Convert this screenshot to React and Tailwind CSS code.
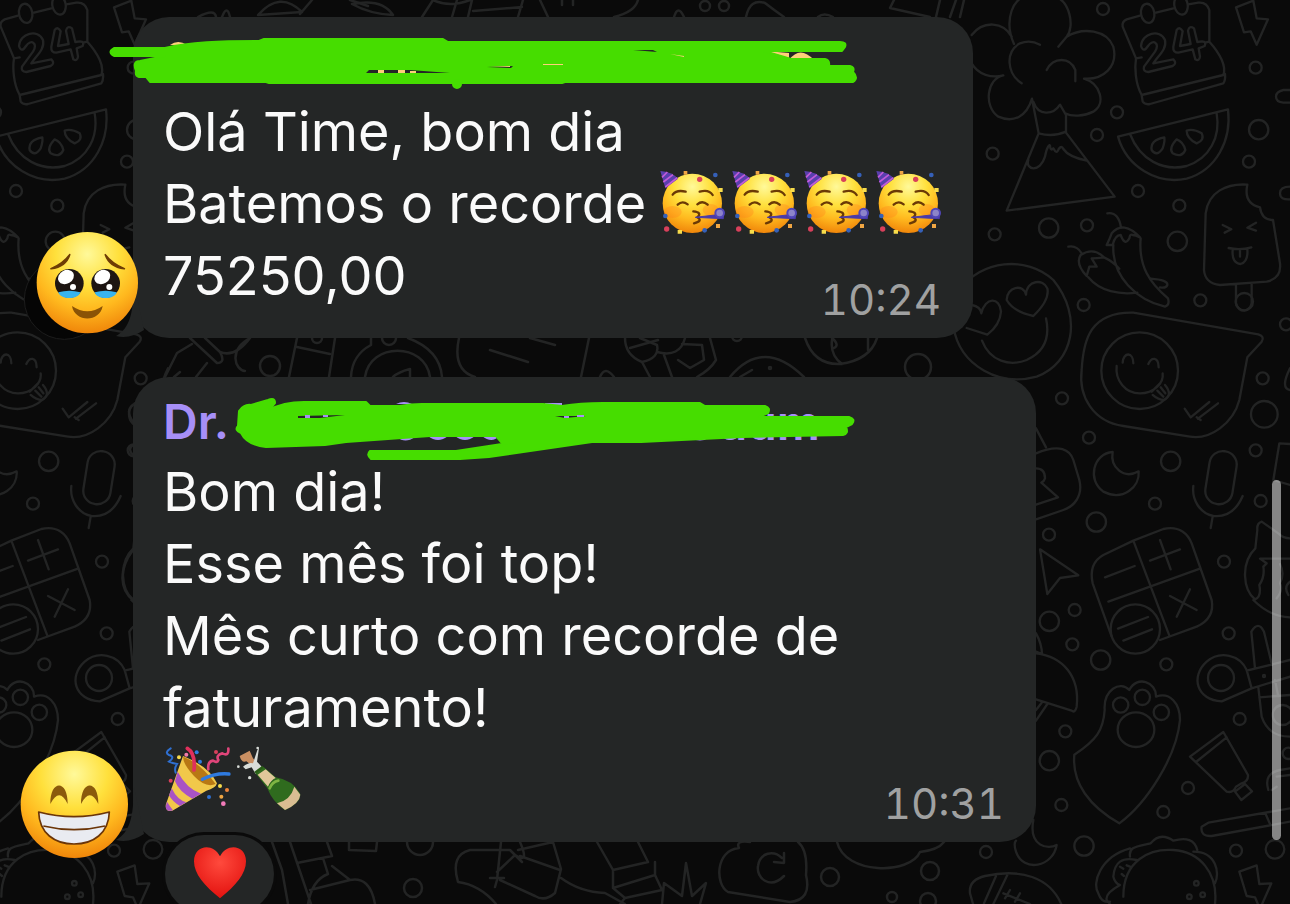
import React from 'react';

const messages = [
  {
    id: 1,
    time: '10:24',
    lines: ['Olá Time, bom dia', 'Batemos o recorde '],
    emojis: ['party', 'party', 'party', 'party'],
    last: '75250,00',
  },
  {
    id: 2,
    time: '10:31',
    sender: 'Dr.',
    lines: ['Bom dia!', 'Esse mês foi top!', 'Mês curto com recorde de', 'faturamento!'],
    lastEmojis: ['popper', 'bottle'],
    reaction: true,
  },
];

const Dots = ({ items }) => items.map(([x, y, r]) => <circle key={`${x}-${y}`} cx={x} cy={y} r={r} />);

// One column of the wallpaper, drawn at three units per pixel
const DoodleColumn = () => (
  <>
    <g transform="scale(.33333)">
      <Dots items={[[429, 27, 18], [887, 203, 18], [471, 337, 18], [411, 405, 18], [98, 461, 18], [896, 389, 29], [867, 485, 18], [534, 573, 18], [658, 617, 18], [104, 703, 18], [266, 684, 29], [381, 676, 18], [652, 724, 29], [371, 915, 18], [721, 901, 18], [978, 973, 18]]} />
      <path d="M162 132C130 60 160-12 205-12H280C330 0 345 80 320 110L295 140M320 110C370 80 440 90 460 140C475 200 430 240 372 236C420 250 440 310 400 335C370 350 335 350 315 340M155 110C130 65 70 60 35 105M35 190C55 225 95 235 130 226C80 235 70 320 115 350C160 370 200 350 216 296L236 400L140 632L464 590L318 398V345L300 314C280 345 235 350 220 305M236 400Q280 412 318 395M185 250C140 220 135 155 180 130Q210 118 240 134M260 210C280 170 330 170 346 210V244M205 480C195 510 240 520 255 470C260 440 270 430 270 438Q272 455 280 445Q290 465 296 447Q305 435 310 447Q325 470 380 482" />
      <path d="M540 47L500 58Q485 65 488 80L528 175C524 200 525 250 545 285L790 225C800 200 780 160 748 125V30Q740 5 715 8L685 13M640 25L588 38M528 175L545 172M735 128L748 125M545 285L548 305Q555 315 570 312L790 250Q797 240 795 222" />
      <ellipse cx="563" cy="40" rx="20" ry="29" transform="rotate(-10 563 40)" />
      <ellipse cx="663" cy="15" rx="20" ry="29" transform="rotate(-10 663 15)" />
      <path d="M543 138C545 100 600 85 615 120C622 150 590 170 580 190L640 178Q652 190 638 198L565 216Q548 215 552 200L585 155C600 130 580 115 564 138Q550 160 543 138ZM650 90L640 140Q638 158 655 158L698 148L706 178Q718 185 720 170L716 145L734 138Q740 125 726 124L712 126L702 85Q688 75 684 92L692 132L660 138L668 94Q660 78 650 90Z" />
      <path d="M828 22L880 2L890 55L924 58L890 134L872 94L852 97ZM990 270H970Q948 275 948 290T970 308H990M990 560Q960 560 960 580T990 598" />
      <path d="M474 410L804 328C815 420 770 510 680 536C590 555 500 500 474 410ZM510 402C540 480 610 515 680 498C750 475 782 410 770 340" />
      <path d="M613 412Q570 420 575 450Q590 472 608 445Q615 425 613 412ZM650 418Q625 445 638 460Q665 475 676 450Q670 425 650 418ZM680 392Q680 415 710 430Q735 420 725 400Q700 385 680 392Z" />
      <path d="M862 554C800 550 745 575 737 640L732 810Q735 850 780 855L920 845Q965 835 960 790L939 660Q905 660 900 622Q850 610 862 554ZM828 852V910Q835 932 852 932Q870 930 875 910V850M788 675L814 688L794 698M888 668L862 683L888 692M806 744Q840 752 874 742M818 750Q815 790 842 792Q865 785 862 748M840 752V770" />
      <path d="M442 640Q475 635 483 682M440 735Q450 715 455 700Q490 660 540 712Q525 705 518 705Q510 700 508 715Q495 740 482 705Q465 705 458 735ZM460 735C455 830 530 900 615 920Q630 915 624 895C570 850 535 800 542 715M325 740Q350 735 365 760M380 828Q345 790 362 765Q400 740 432 772Q410 775 395 775L410 800H388L380 828M432 772Q460 785 478 806M385 832C420 875 480 885 532 878M572 836Q625 840 622 855Q618 866 600 862" />
      <path d="M0 870C60 780 200 765 280 840C370 950 340 1090 230 1130C120 1160 0 1100-20 980M198 884C190 850 140 860 140 900Q160 935 220 948Q270 900 262 865C250 835 200 840 198 884ZM35 915Q62 920 64 940C75 890 120 890 123 935Q120 975 82 1004L20 984" />
    </g>
    <g transform="translate(0 300) scale(.33333)">
      <Dots items={[[908, 235, 18], [306, 295, 18], [387, 413, 18], [913, 343, 40], [887, 451, 18], [632, 484, 29], [585, 611, 18], [902, 603, 18], [409, 666, 29], [267, 704, 18], [792, 785, 18], [539, 212, 115], [853, 5, 26]]} />
      <path d="M66 122C90 185 150 200 200 180C255 155 270 110 258 55" />
      <path d="M365 210C370 120 390 35 520 38L895 103Q915 110 905 125L862 172L838 300C820 370 750 420 690 410L490 378C400 365 355 290 365 210ZM488 188C490 155 520 155 520 190M565 192C575 170 595 170 596 202M470 198C465 240 495 280 540 280C580 280 612 250 608 220M575 275L600 250M578 285Q595 300 612 300Q640 285 615 255M592 272L610 290M602 262L616 280M674 326L692 352L748 306M714 356L774 310M710 352L722 360" />
      <path d="M228 385L258 442M228 460C300 430 330 450 340 480L358 540C370 590 340 620 310 630L228 658M228 505Q255 505 255 535Q252 545 244 548L294 592L228 614" />
      <path d="M458 456C400 460 380 540 430 575C490 605 540 560 536 514C490 540 450 500 458 456Z" />
      <rect x="742" y="453" width="82" height="160" rx="40" transform="rotate(9 783 533)" />
      <path d="M700 558C695 600 720 640 760 648C800 652 830 630 848 588M758 650L752 684" />
      <path d="M240 748L355 826L300 834L262 882ZM455 1010L398 850Q385 790 430 765L520 722L610 687C660 675 685 705 695 730L755 900Q765 955 710 980L600 1020M628 1007L520 722M445 905L722 805M435 832L524 798M570 782L660 748M600 720L632 808M630 888L710 930M690 868L650 950" />
      <circle cx="526" cy="987" r="74" />
      <path d="M474 986L564 951M490 1022L576 988M990 205Q960 265 990 270M990 432L958 430L940 540L990 555M905 665Q890 670 892 690L886 745C840 790 850 870 885 898Q905 890 898 855Q915 830 910 800L920 790L900 776H990M905 665L955 700Q970 715 990 715M960 792Q975 820 960 850Q970 870 950 895M880 900Q930 950 990 952M990 845Q970 860 985 885" />
    </g>
    <g transform="translate(0 600) scale(.33333)">
      <Dots items={[[344, 30, 18], [268, 64, 29], [337, 133, 18], [422, 180, 29], [619, 193, 18], [806, 100, 18], [783, 234, 39], [316, 394, 18], [268, 482, 29], [839, 357, 18], [304, 615, 18], [684, 564, 18], [610, 636, 18], [372, 738, 29], [828, 752, 18], [945, 748, 28], [482, 315, 23], [547, 292, 23], [604, 337, 23], [78, 756, 18], [709, 850, 7], [688, 890, 7], [728, 884, 7], [912, 228, 3], [968, 345, 30], [985, 460, 17]]} />
      <path d="M228 100Q245 130 246 162L228 155M228 160C310 170 360 230 350 320Q345 340 335 332L228 298M262 312L228 362M245 308L228 330" />
      <ellipse cx="528" cy="389" rx="55" ry="52" />
      <path d="M434 330C430 270 480 240 508 270C530 225 590 245 588 290C630 275 660 310 660 360C650 470 560 610 478 670C390 620 335 550 343 464C410 420 430 390 434 330Z" />
      <path d="M860 210C840 165 780 150 740 185C690 230 710 300 785 304L875 265ZM860 212L990 180M875 265L990 230M885 205L874 95Q895 60 912 95L936 195M895 262L905 350Q925 410 990 410M945 240L955 290M898 292L990 285M690 470L790 396L864 525Q865 545 845 550L828 560Q820 580 800 575ZM708 486L800 412M825 575L855 552L876 574L844 600ZM725 680Q720 710 755 708L990 665M725 680L745 668L990 625M916 640L930 672M925 570Q910 520 960 510L990 505M950 530L990 525M935 570L950 560" />
      <path d="M220 660C205 740 265 750 290 735C280 800 190 820 168 755Q160 730 168 722M30 880Q25 840 75 828C180 805 270 830 305 915M30 880L40 915M108 828L72 910M142 825L100 912M130 880L210 912M150 870L135 895M180 880L165 905M838 815L890 796L898 852L934 850L905 915M838 815L860 888L885 892L895 915" />
      <path d="M510 770C505 740 530 740 572 730Q600 695 640 722Q700 705 712 750M510 745C420 770 395 850 415 880Q425 910 450 905M490 890C490 780 570 745 640 750C720 755 775 820 765 912M700 755C770 755 780 820 765 850M530 780Q465 765 460 830Q465 850 480 855M480 855Q435 880 440 900L450 912M480 800L490 806M500 796L510 800M485 822L492 828" />
    </g>
  </>
);

const Wallpaper = () => (
  <svg className="absolute left-0 top-0 h-[904px] w-[1290px]" viewBox="0 0 1290 904" fill="none" stroke="#232424" strokeWidth="7" strokeLinecap="round" strokeLinejoin="round" aria-hidden="true">
    <g transform="translate(960 0)"><DoodleColumn /></g>
    <g transform="translate(-162 0)"><DoodleColumn /></g>
    <g strokeWidth="2.5">
      <path d="M198 17Q215 8 216 17M222 17Q227 4 230 17M258 15Q280-10 302 12ZM300 14L312 0M350 0L368 6M352 4Q382-2 393 15Q370 14 352 4M422 17L433 0M433 0Q450 8 470 0M452 17L457 0M468 17L472 0M473 11L522 7M518 17L523 0M540 0L548 17M562 0V5M573 0V5M638 0Q635 12 614 17M674 17Q678 4 684 17M746 17Q750-2 765 3Q774 10 784 17M818 17Q824 12 833 17M894 0L890 8L930 17M940 0L936 17M956 0L950 17M964 0L960 17" />
      <circle cx="705" cy="6" r="5" /><circle cx="724" cy="6" r="5" />
      <path d="M190 338L217 363Q226 363 220 352L205 338M220 352Q235 358 250 338M165 377L177 353L192 344M196 377L207 363M174 377L180 372M250 338C228 350 235 370 245 371M297 338L289 377M335 338L329 377M297 347L330 354M133 405Q125 410 133 422M133 445Q127 449 133 455M133 550C118 570 120 590 133 600" />
      <circle cx="270" cy="366" r="10" /><circle cx="317" cy="338" r="5" /><circle cx="389" cy="338" r="7" />
      <path d="M371 338V345Q352 355 351 377M408 338Q440 350 442 377M365 377C370 342 425 342 430 377M393 377Q398 372 410 369V377M459 338Q452 370 475 377M490 350L528 362M530 338L555 345M589 338L581 377M600 377Q605 365 614 377M625 338Q625 355 642 362Q660 358 657 345L640 338M630 348L658 340M642 362L650 377M657 352Q680 358 685 338M664 355L672 377M682 344L702 345L704 360L690 368L678 360M710 338L716 360Q710 370 697 377M730 377Q763 337 804 377M740 377L752 370M805 338Q814 365 840 364Q870 360 877 338M832 338Q840 345 834 348M832 340Q830 355 842 364M868 338V350" />
      <circle cx="737" cy="336" r="5" /><circle cx="770" cy="368" r="1" /><circle cx="918" cy="367" r="13" />
      <circle cx="420" cy="842" r="13" /><circle cx="413" cy="888" r="9" /><circle cx="830" cy="877" r="9" /><circle cx="930" cy="871" r="9" /><circle cx="892" cy="897" r="5" /><circle cx="928" cy="901" r="8" />
      <path d="M272 842L282 870L288 904M290 842L311 904M327 842L332 856L297 863M323 858L328 874Q312 880 308 904M332 866L350 880L310 890M350 880Q370 876 375 904M349 842V850L376 851L377 842M501 842L497 880L495 887M490 878H504M497 872L515 855Q530 865 520 842M470 850Q450 855 458 882Q480 885 496 904M470 850L510 850L522 862M518 850L553 842L561 869L555 893Q545 902 535 896L500 880M520 856L560 870M561 878Q580 892 605 893L625 904M597 842L613 870L648 862L638 842M613 870V888L655 875V862M613 888L625 898L662 890L655 875M625 898L620 904M662 904L664 883L682 896L686 863L692 896L706 883L700 904M739 848Q735 840 750 842M739 848C715 850 715 885 728 892L790 902Q812 900 806 875Q808 850 798 842M784 876C770 890 756 878 758 866C760 852 774 850 782 858M774 862L784 863L784 853M837 842C845 875 910 875 920 852Q938 850 944 842" />
    </g>
  </svg>
);

const PartyFace = () => (
  <>
    <circle cx="397" cy="550" r="89" fill="url(#face)" />
    <ellipse cx="338" cy="576" rx="27" ry="18" fill="#ff7a1c" opacity=".3" />
    <ellipse cx="452" cy="570" rx="24" ry="18" fill="#ff7a1c" opacity=".3" />
    <path d="M301 453Q335 455 354 476L316 505Z" fill="#5a3fae" />
    <path d="M322 456L306 472M339 464L310 486M352 473L316 501" stroke="#c25bd8" strokeWidth="5" />
    <g fill="none" stroke="#6b3a06" strokeWidth="7" strokeLinecap="round">
      <path d="M338 524Q350 508 377 515M419 515Q447 507 458 525M353 554Q367 541 383 553M412 553Q427 540 443 554" />
      <path d="M400 574Q428 577 412 592Q430 603 402 610" />
    </g>
    <path d="M406 592L490 582V596Z" fill="#4a3aaa" stroke="#4a3aaa" strokeWidth="3" />
    <circle cx="479" cy="579" r="13" fill="#8d84c9" stroke="#5146b8" strokeWidth="6" />
    <circle cx="419" cy="478" r="8" fill="#d8405b" /><circle cx="320" cy="627" r="8" fill="#d8405b" />
    <circle cx="466" cy="465" r="7" fill="#3560b8" /><circle cx="316" cy="588" r="7" fill="#3560b8" /><circle cx="434" cy="631" r="7" fill="#3560b8" />
    <path d="M371 453h11v11h-11zM468 612h12v12h-12z" fill="#f0a643" />
    <path d="M475 504h13v12h-13zM353 630h13v11h-13z" fill="#f7dc4b" />
  </>
);

const Popper = () => (
  <>
    <path d="M552 408Q632 440 654 490Q650 505 622 512L520 572Q500 578 500 555Z" fill="#f1c84a" />
    <path d="M553 410Q605 430 650 492Q620 505 585 468Q550 430 553 410Z" fill="#b87814" />
    <path d="M536 455Q562 505 606 521L580 536Q540 515 528 484ZM518 505Q535 540 562 547L543 558Q520 545 510 526ZM504 545Q512 558 522 571Q502 577 500 560Z" fill="#a953c4" />
    <g fill="none" strokeLinecap="round" strokeWidth="8">
      <path d="M515 385Q495 398 510 405Q530 410 510 425Q520 430 534 432Q525 445 530 458" stroke="#2f6fd0" strokeWidth="6" />
      <path d="M565 385Q590 400 585 450" stroke="#e0305c" strokeWidth="11" />
      <path d="M688 386Q690 410 670 400Q650 405 658 420Q655 430 642 422Q625 425 628 448" stroke="#e0457a" />
      <path d="M610 478Q650 458 690 462" stroke="#2f7be0" strokeWidth="10" />
    </g>
    <circle cx="540" cy="412" r="6" fill="#f7dc4b" /><circle cx="562" cy="404" r="6" fill="#f27ba9" /><circle cx="593" cy="397" r="6" fill="#2f7be0" /><circle cx="603" cy="425" r="6" fill="#2f7be0" />
    <circle cx="651" cy="396" r="6" fill="#d8405b" /><circle cx="515" cy="482" r="6" fill="#d8405b" /><circle cx="663" cy="498" r="6" fill="#f7dc4b" /><circle cx="684" cy="510" r="6" fill="#f0853a" />
    <circle cx="630" cy="531" r="6" fill="#2f6fd0" /><circle cx="667" cy="530" r="6" fill="#f0a643" /><circle cx="673" cy="551" r="7" fill="#f27bb9" />
  </>
);

const Bottle = () => (
  <>
    <path d="M722 408L752 392L762 415L770 424L758 436L742 424Q728 430 722 408Z" fill="#c98f62" />
    <path d="M732 440Q750 425 762 430L775 390L780 384L774 425L788 440L770 462L758 442L740 448Z" fill="#d8dcd8" />
    <path d="M769 459L793 440L830 472Q880 480 903 520Q910 545 858 571Q820 545 805 505Z" fill="#2f6b1e" />
    <path d="M776 464L800 448L830 474Q815 480 807 500Z" fill="#e0c79a" />
    <path d="M886 500L904 524Q902 550 858 570L834 550Q875 540 886 500Z" fill="#d9bd92" />
    <path d="M812 505Q820 485 838 482" fill="none" stroke="#7fb443" strokeWidth="8" strokeLinecap="round" />
    <path d="M768 458L792 440" stroke="#295c16" strokeWidth="7" />
    <circle cx="752" cy="473" r="5" fill="#d8dcd8" /><circle cx="718" cy="440" r="4" fill="#d8dcd8" /><circle cx="776" cy="384" r="4" fill="#d8dcd8" />
  </>
);

const emojiArt = {
  party: { box: '306 444 216 216', label: '🥳', Art: PartyFace },
  popper: { box: '492 372 216 216', label: '🎉', Art: Popper },
  bottle: { box: '708 372 216 216', label: '🍾', Art: Bottle },
};

const Emoji = ({ name }) => {
  const { box, label, Art } = emojiArt[name];
  return (
    <svg className="h-[72px] w-[72px] shrink-0 overflow-visible" viewBox={box} role="img" aria-label={label}>
      <Art />
    </svg>
  );
};

const TearyAvatar = () => (
  <svg className="relative z-10 -mr-[7px] h-[120px] w-[140px] shrink-0 overflow-visible" viewBox="0 654 420 360" role="img" aria-label="🥹">
    <path d="M402 850C400 940 390 985 348 1008Q390 1018 432 990Z" fill="#242626" />
    <circle cx="193" cy="898" r="120" fill="#050505" stroke="#1c1c1c" strokeWidth="3" />
    <circle cx="262" cy="848" r="152" fill="url(#face)" />
    <path d="M153 806Q198 800 209 764Q190 790 153 806ZM373 806Q328 800 316 764Q335 790 373 806Z" fill="#6e3d05" stroke="#6e3d05" strokeWidth="5" strokeLinejoin="round" />
    {[208, 317].map((x) => (
      <g key={x}>
        <circle cx={x} cy="850" r="43" fill="#1d1512" />
        <path d={`M${x - 33} 877Q${x} 868 ${x + 33} 877C${x + 28} 900 ${x - 28} 900 ${x - 33} 877Z`} fill="#38b4ee" />
        <ellipse cx={x - 10} cy="831" rx="25" ry="20" fill="#fff" transform={`rotate(-30 ${x - 10} 831)`} />
        <circle cx={x + 11} cy="861" r="9" fill="#fff" />
      </g>
    ))}
    <path d="M216 918Q262 950 308 918C300 968 224 968 216 918Z" fill="#8a5306" />
  </svg>
);

const GrinAvatar = () => (
  <svg className="relative z-10 -mr-[7px] h-[120px] w-[140px] shrink-0 overflow-visible" viewBox="0 306 420 360" role="img" aria-label="😁">
    <path d="M402 502C400 592 390 637 348 660Q390 670 432 642Z" fill="#242626" />
    <circle cx="223" cy="553" r="161" fill="url(#face)" />
    <path d="M151 552C150 478 204 478 203 552Q178 500 151 552ZM243 552C242 478 296 478 295 552Q270 500 243 552Z" fill="#8a5a0c" />
    <path d="M116 576Q222 604 328 576C326 640 280 672 222 672S118 640 116 576Z" fill="#e9ebf1" stroke="#6b3508" strokeWidth="5" strokeLinejoin="round" />
    <path d="M130 618Q222 640 315 618" fill="none" stroke="#6b3508" strokeWidth="5" />
  </svg>
);

const Heart = () => (
  <svg className="h-[54px] w-[54px]" viewBox="576 684 162 162" role="img" aria-label="❤️">
    <path d="M657 838C610 800 579 765 579 727C579 678 636 670 657 712C678 670 735 678 735 727C735 765 704 800 657 838Z" fill="url(#heart)" />
  </svg>
);

const FirstScribble = () => (
  <svg className="absolute -left-[133px] -top-[17px] h-[120px] w-[1036px]" viewBox="0 0 1036 120" aria-hidden="true">
    <path d="M170 45Q178 39 187 45ZM765 51L789 53V58ZM789 60Q800 45 814 60Z" fill="#fdd07a" />
    <g fill="#46dd00" stroke="#46dd00" strokeWidth="2" strokeLinejoin="round">
      <path d="M114 48H165C190 42 220 41 259 41L264 39H443L448 42H840Q847 42 845 47L842 51H764L791 59H825Q830 60 829 66H850Q855 67 853 72Q859 78 853 82H565L562 83H269L266 82H150L146 77H139Q135 76 136 71Q132 61 140 61L165 56H114Q107 52 114 48Z" />
      <circle cx="457" cy="84" r="4" />
    </g>
    <path d="M366 73L369 70L410 70L450 73ZM487 67L513 66L511 68ZM633 50L653 50L657 52Z" fill="#242626" />
    <path d="M378 70H384V73H378ZM398 70H405V73H398ZM410 71H416V73H410ZM490 67L510 66V67ZM543 64H563V65H543ZM670 54L684 56V57Z" fill="#fdd07a" />
  </svg>
);

const SecondScribble = () => (
  <svg className="absolute -left-[133px] top-0 h-[100px] w-[1036px]" viewBox="0 377 1036 100" aria-hidden="true">
    <text x="820" y="440" textAnchor="end" className="text-[48px] font-semibold" fontFamily="Inter, sans-serif" fill="#a78ff8">aum</text>
    <path d="M397 437Q405 444 415 437ZM428 436Q438 444 448 436ZM455 436Q465 444 475 436ZM482 436Q492 444 499 436ZM396 404Q404 400 412 404ZM545 403H562V407H545ZM690 437Q700 444 710 437ZM722 437Q730 443 738 437Z" fill="#a78ff8" />
    <path d="M268 400Q275 397 275 403L269 410Q283 402 304 402H366L370 406H400Q410 404 422 404H543L562 406Q580 403 603 403H700L705 406H765Q771 408 768 413L759 417H849Q856 419 852 424L846 427Q849 434 843 435L742 437L641 442H592L489 457L460 459H371Q366 455 370 451H456L515 442H501L496 436H430L346 442L325 445L266 447Q247 445 241 433Q234 430 238 426L239 411Q244 404 251 405Z" fill="#46dd00" stroke="#46dd00" strokeWidth="2" strokeLinejoin="round" />
    <path d="M298 416L345 415L320 418L298 418ZM555 416H586L565 418Z" fill="#242626" />
    <path d="M305 415H310V418H305ZM323 415H328V417H323ZM564 416H569V418H564ZM577 415H584V417H577Z" fill="#a78ff8" />
  </svg>
);

const Message = ({ message }) => (
  <article className="flex items-end">
    {message.id === 1 ? <TearyAvatar /> : <GrinAvatar />}
    <div className={`relative w-full rounded-[36px] bg-[#242626] pb-[26px] pl-[30px] pr-8 pt-[10px] text-[54px] leading-[72px] text-[#fafafa] ${message.id === 1 ? 'max-w-[840px]' : 'max-w-[903px]'}`}>
      <h2 className="h-[69px] text-[48px] font-semibold leading-[69px] text-[#a78ff8]">{message.sender}</h2>
      {message.id === 1 ? <FirstScribble /> : <SecondScribble />}
      {message.lines.map((line, i) => (
        <p key={line} className="flex whitespace-pre">
          {line}
          {message.emojis && i === message.lines.length - 1 && message.emojis.map((name, n) => <Emoji key={n} name={name} />)}
        </p>
      ))}
      <div className="flex items-end justify-between">
        <p className="flex">
          {message.last}
          {message.lastEmojis && message.lastEmojis.map((name) => <Emoji key={name} name={name} />)}
        </p>
        <time className="-mb-2 text-[42px] leading-[40px] tabular-nums text-[#a0a1a1]">{message.time}</time>
      </div>
      {message.reaction && (
        <button type="button" className="absolute left-8 top-full -mt-[7px] flex h-[78px] w-[109px] items-center justify-center rounded-full bg-[#242626] ring-[3px] ring-[#0a0a0a]">
          <Heart />
        </button>
      )}
    </div>
  </article>
);

export default function App() {
  return (
    <main className="relative h-screen overflow-hidden bg-[#0a0a0a] font-['Inter',sans-serif]">
      <svg className="absolute h-0 w-0" aria-hidden="true">
        <defs>
          <radialGradient id="face" cx=".5" cy=".22" r=".78">
            <stop offset="0" stopColor="#fff99a" />
            <stop offset=".4" stopColor="#ffe03c" />
            <stop offset=".7" stopColor="#ffb81e" />
            <stop offset="1" stopColor="#f0860a" />
          </radialGradient>
          <radialGradient id="heart" cx=".5" cy=".3" r=".7">
            <stop offset="0" stopColor="#ff4a3d" />
            <stop offset="1" stopColor="#e3120f" />
          </radialGradient>
        </defs>
      </svg>
      <Wallpaper />
      <section className="relative flex flex-col gap-[39px] pt-[17px]">
        {messages.map((message) => (
          <Message key={message.id} message={message} />
        ))}
      </section>
      <div className="absolute right-[9px] top-[480px] h-[360px] w-[9px] rounded-full bg-white/50" />
    </main>
  );
}
